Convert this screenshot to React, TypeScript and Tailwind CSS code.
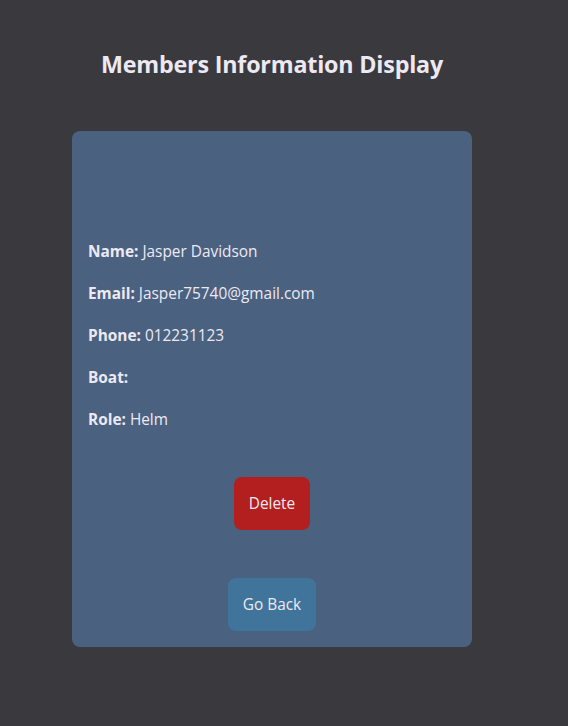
export default function App() {
  const rows = [
    { label: "Name:", value: "Jasper Davidson" },
    { label: "Email:", value: "Jasper75740@gmail.com" },
    { label: "Phone:", value: "012231123" },
    { label: "Boat:", value: "" },
    { label: "Role:", value: "Helm" },
  ];

  return (
    <div
      className="min-h-[726px] bg-[#3a393e] text-[#ede9f3]"
      style={{ fontFamily: '"Open Sans", "Noto Sans", sans-serif' }}
    >
      <div className="w-[544px] flex flex-col items-center">
        <h1 className="mt-[47px] text-[23.3px] leading-[34px] font-bold tracking-[-0.2px]">
          Members Information Display
        </h1>

        <div className="mt-[50px] w-[400px] h-[516px] bg-[#4a6180] rounded-[8px] px-4 pt-[108px] flex flex-col">
          {rows.map((row, i) => (
            <p key={i} className="text-[15.4px] leading-[26px] mb-4 whitespace-pre">
              <span className="font-bold">{row.label}</span> {row.value}
            </p>
          ))}

          <div className="flex flex-col items-center mt-[28px]">
            <button className="w-[76px] h-[53px] rounded-[8px] bg-[#b31f1f] text-[15.4px] text-[#ede9f3]">
              Delete
            </button>
            <button className="mt-[48px] w-[88px] h-[53px] rounded-[8px] bg-[#41749a] text-[15.4px] text-[#ede9f3]">
              Go Back
            </button>
          </div>
        </div>
      </div>
    </div>
  );
}
